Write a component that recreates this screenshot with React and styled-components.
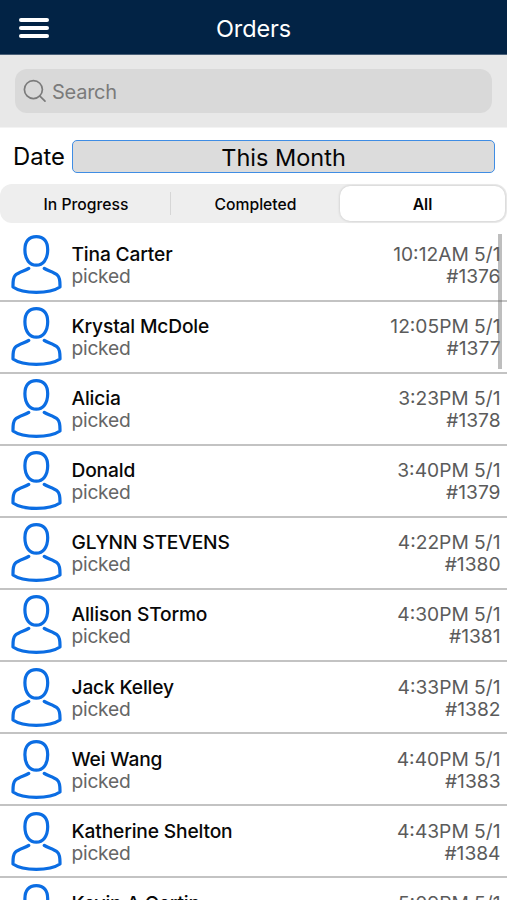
import React from "react";
import styled, { createGlobalStyle } from "styled-components";

const GlobalStyle = createGlobalStyle`
  * { box-sizing: border-box; }
  body { margin: 0; background: #fff; overflow: hidden; }
`;

const Screen = styled.main`
  position: relative;
  display: flex;
  flex-direction: column;
  width: 507px;
  height: 900px;
  overflow: hidden;
  background: #fff;
  color: #050505;
  font-family: Inter, "Liberation Sans", sans-serif;
`;

const Header = styled.header`
  display: grid;
  grid-template-columns: 68px 1fr 68px;
  align-items: center;
  flex: none;
  height: 55px;
  padding-top: 3px;
  background: #022345;
  border-bottom: 1px solid #4a6078;
`;

const MenuButton = styled.button`
  display: flex;
  flex-direction: column;
  gap: 4px;
  width: 30px;
  margin: -2px 0 0 19px;
  padding: 0;
  border: 0;
  background: none;
`;

const MenuBar = styled.span`
  height: 4px;
  border-radius: 2px;
  background: #fff;
`;

const Title = styled.h1`
  margin: 0;
  text-align: center;
  color: #fff;
  font-size: 23.5px;
  font-weight: 400;
  line-height: 30px;
  letter-spacing: -0.1px;
`;

const SearchArea = styled.div`
  flex: none;
  height: 73px;
  padding: 14px 15px 0;
  background: #e8e8e8;
  border-bottom: 1px solid #f3f3f3;
`;

const SearchField = styled.div`
  display: flex;
  align-items: center;
  height: 44px;
  padding-left: 8px;
  gap: 5px;
  border-radius: 12px;
  background: #d9d9d9;
  color: #7b7b7b;
  font-size: 20px;
  letter-spacing: -0.25px;
`;

const SearchLabel = styled.span`
  padding-top: 1px;
`;

const DateRow = styled.div`
  display: flex;
  align-items: center;
  flex: none;
  height: 56px;
  padding: 0 12px 0 13px;
`;

const DateLabel = styled.span`
  width: 59px;
  font-size: 23.8px;
  letter-spacing: 0;
`;

const DateSelect = styled.div`
  flex: 1;
  height: 33px;
  border: 1.5px solid #3f8de4;
  border-radius: 5px;
  background: #dcdcdc;
  text-align: center;
  font-size: 23.5px;
  line-height: 33px;
  letter-spacing: 0;
`;

const Segments = styled.div`
  display: grid;
  grid-template-columns: 168px 1px 169px 1fr;
  flex: none;
  height: 39px;
  padding: 2px 2px 2px 2px;
  border-radius: 12px;
  background: #eeeeee;
`;

const Segment = styled.div`
  display: flex;
  align-items: center;
  justify-content: center;
  border-radius: 10px;
  background: ${(p) => (p.$active ? "#fff" : "transparent")};
  box-shadow: ${(p) => (p.$active ? "0 0 3px rgba(0,0,0,.2)" : "none")};
  font-size: 15.7px;
  font-weight: ${(p) => (p.$active ? 600 : 500)};
  line-height: 20px;
  padding-top: 2px;
`;

const Divider = styled.span`
  width: 1px;
  height: 23px;
  align-self: center;
  background: #d6d6d6;
`;

const List = styled.div`
  position: relative;
  flex: none;
  padding-top: 6.5px;
`;

const Row = styled.article`
  display: flex;
  height: 72.1px;
  padding: 4.5px 6.5px 0 11px;
  border-bottom: 2px solid #c3c3c3;
  font-size: 19.2px;
  line-height: 22px;
`;

const Person = styled.div`
  flex: 1;
  padding: 9px 0 0 9.5px;
`;

const Name = styled.div`
  color: #080808;
  font-weight: 500;
  letter-spacing: -0.16px;
  white-space: nowrap;
`;

const Status = styled.div`
  color: #666;
  letter-spacing: -0.25px;
`;

const OrderInfo = styled.div`
  padding-top: 9px;
  text-align: right;
  color: #5b5b5b;
  letter-spacing: 0;
`;

const ScrollThumb = styled.div`
  position: absolute;
  top: 11px;
  right: 5px;
  width: 4px;
  height: 135px;
  background: rgba(100, 100, 100, 0.42);
`;

const IconSvg = styled.svg`
  display: block;
  flex: none;
  fill: none;
  stroke: currentColor;
  stroke-linecap: round;
  stroke-linejoin: round;
`;

const Avatar = styled(IconSvg)`
  color: #0b6de3;
`;

const orders = [
  ["Tina Carter", "10:12AM 5/1", "#1376"],
  ["Krystal McDole", "12:05PM 5/1", "#1377"],
  ["Alicia", "3:23PM 5/1", "#1378"],
  ["Donald", "3:40PM 5/1", "#1379"],
  ["GLYNN STEVENS", "4:22PM 5/1", "#1380"],
  ["Allison STormo", "4:30PM 5/1", "#1381"],
  ["Jack Kelley", "4:33PM 5/1", "#1382"],
  ["Wei Wang", "4:40PM 5/1", "#1383"],
  ["Katherine Shelton", "4:43PM 5/1", "#1384"],
  ["Kevin A Certin", "5:09PM 5/1", "#1385"],
];

function PersonIcon() {
  return (
    <Avatar width="51" height="62" viewBox="0 0 51 62" strokeWidth="3.2">
      <path d="M25.3 2.6C17.8 2.6 13.9 7.6 13.9 15.8C13.9 25.6 18.8 31.2 25.3 31.2S36.7 25.6 36.7 15.8C36.7 7.6 32.8 2.6 25.3 2.6Z" />
      <path d="M17.8 34.4C14.5 36.8 7.5 38 4.2 41.4C1.7 44 2 48.5 2 53C7 56.5 15.5 58.4 25.3 58.4S43.8 56.5 49 53C49 48.5 49.3 44 46.6 41.4C43.3 38 36.5 36.8 33.2 34.4" />
    </Avatar>
  );
}

export default function App() {
  return (
    <>
      <GlobalStyle />
      <Screen>
        <Header>
          <MenuButton aria-label="Menu">
            <MenuBar />
            <MenuBar />
            <MenuBar />
          </MenuButton>
          <Title>Orders</Title>
        </Header>
        <SearchArea>
          <SearchField>
            <IconSvg width="24" height="24" viewBox="0 0 24 24" strokeWidth="1.7">
              <circle cx="10.4" cy="10.6" r="9" />
              <path d="M16.9 17.1L22 22.2" />
            </IconSvg>
            <SearchLabel>Search</SearchLabel>
          </SearchField>
        </SearchArea>
        <DateRow>
          <DateLabel>Date</DateLabel>
          <DateSelect>This Month</DateSelect>
        </DateRow>
        <Segments>
          <Segment>In Progress</Segment>
          <Divider />
          <Segment>Completed</Segment>
          <Segment $active>All</Segment>
        </Segments>
        <List>
          {orders.map(([name, time, number]) => (
            <Row key={number}>
              <PersonIcon />
              <Person>
                <Name>{name}</Name>
                <Status>picked</Status>
              </Person>
              <OrderInfo>
                <div>{time}</div>
                <div>{number}</div>
              </OrderInfo>
            </Row>
          ))}
          <ScrollThumb />
        </List>
      </Screen>
    </>
  );
}
